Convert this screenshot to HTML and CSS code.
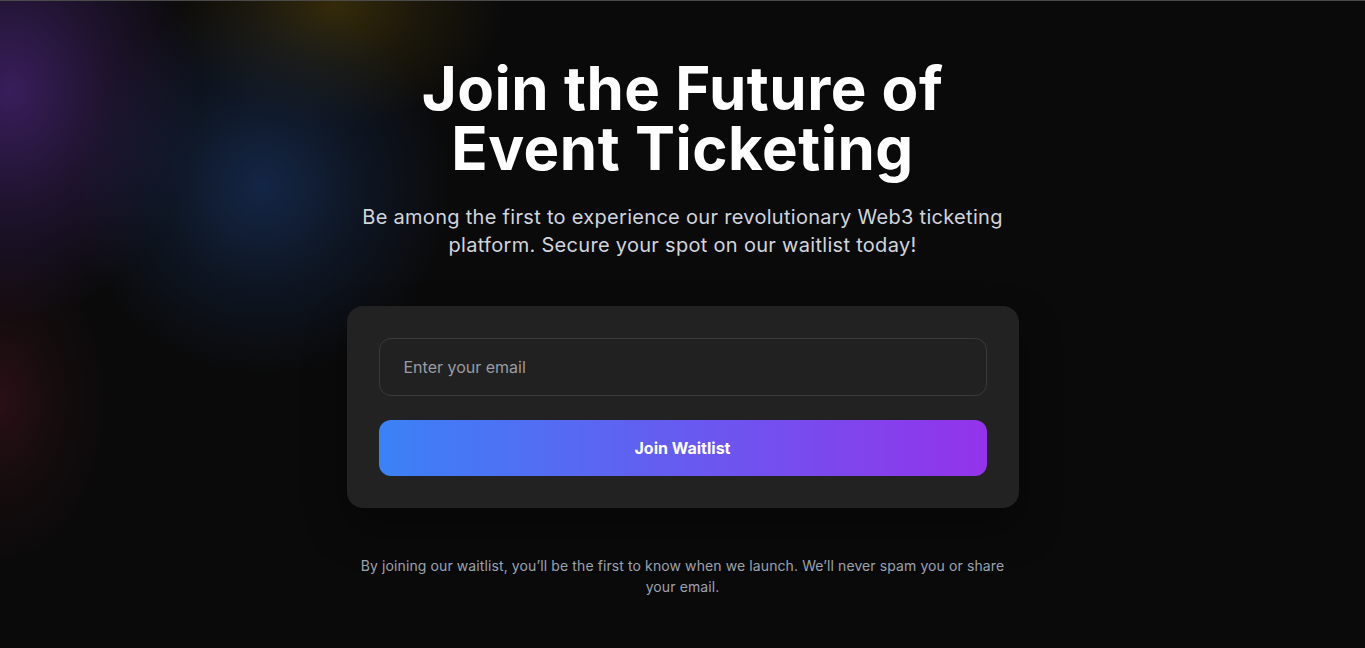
FILE: index.html
```html
<!DOCTYPE html>
<html lang="en">
<head>
<meta charset="utf-8">
<title>Join the Waitlist</title>
<link rel="stylesheet" href="styles.css">
</head>
<body>
<div class="glow"></div>
<main class="wrap">
  <h1 class="title">Join the Future of<br>Event Ticketing</h1>
  <p class="lead">Be among the first to experience our revolutionary Web3 ticketing platform. Secure your spot on our waitlist today!</p>
  <form class="card">
    <input class="email" type="email" placeholder="Enter your email">
    <button class="btn" type="button">Join Waitlist</button>
  </form>
  <p class="note">By joining our waitlist, you’ll be the first to know when we launch. We’ll never spam you or share your email.</p>
</main>
</body>
</html>
```
FILE: styles.css
```css
* { box-sizing: border-box; }
html, body { margin: 0; height: 100%; }
body {
  background: #0a0a0a;
  border-top: 1px solid #4a4a4a;
  font-family: Inter, "Noto Sans", sans-serif;
  color: #fff;
  overflow: hidden;
  position: relative;
}
.glow {
  position: absolute;
  inset: 0;
  pointer-events: none;
  background:
    radial-gradient(circle 190px at 262px 185px, rgba(22,45,85,0.8), rgba(22,45,85,0.35) 50%, rgba(22,45,85,0) 100%),
    radial-gradient(ellipse 190px 230px at 10px 90px, rgba(62,32,100,0.9), rgba(62,32,100,0.4) 50%, rgba(62,32,100,0) 100%),
    radial-gradient(ellipse 170px 120px at 335px 5px, rgba(60,48,10,0.85), rgba(60,48,10,0.35) 50%, rgba(60,48,10,0) 100%),
    radial-gradient(ellipse 110px 170px at 0px 400px, rgba(55,18,26,0.7), rgba(55,18,26,0.25) 50%, rgba(55,18,26,0) 100%);
}
.wrap {
  position: relative;
  display: flex;
  flex-direction: column;
  align-items: center;
  padding-top: 57px;
  text-align: center;
}
.title {
  margin: 0;
  font-size: 60px;
  line-height: 60px;
  font-weight: 700;
  letter-spacing: 0.5px;
}
.lead {
  margin: 25px 0 0;
  max-width: 672px;
  font-size: 20px;
  line-height: 28px;
  letter-spacing: 0.3px;
  color: #d1d5db;
}
.card {
  margin-top: 47px;
  width: 672px;
  padding: 32px;
  background: #222222;
  border-radius: 16px;
  display: flex;
  flex-direction: column;
  gap: 24px;
  box-shadow: 0 20px 40px rgba(0,0,0,0.35);
}
.email {
  height: 58px;
  padding: 0 24px;
  background: #212121;
  border: 1px solid #3a3a3a;
  border-radius: 12px;
  font: inherit;
  font-size: 16px;
  color: #fff;
  outline: none;
}
.email::placeholder { color: #9a9ca2; }
.btn {
  height: 56px;
  border: 0;
  border-radius: 12px;
  background: linear-gradient(90deg, #3b82f6, #9333ea);
  color: #fff;
  font: inherit;
  font-size: 16px;
  font-weight: 700;
}
.note {
  margin: 47px 0 0;
  max-width: 672px;
  font-size: 14px;
  line-height: 21px;
  letter-spacing: 0.1px;
  color: #9ca3af;
}
```
